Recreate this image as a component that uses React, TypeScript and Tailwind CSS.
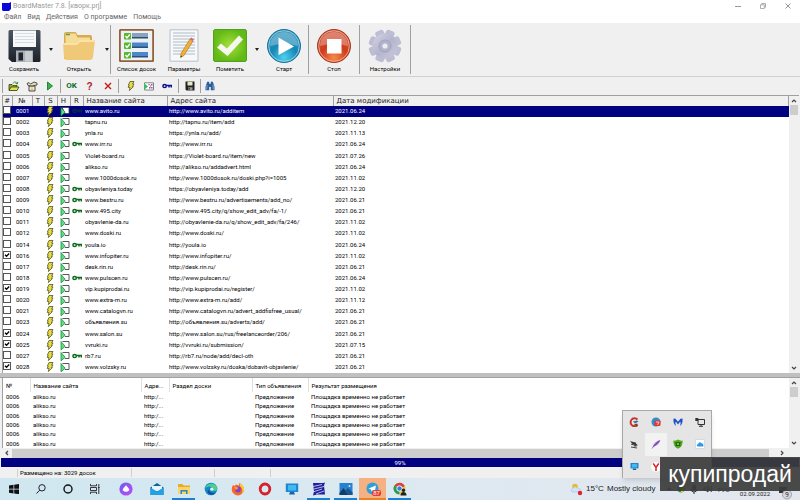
import React, { useState } from 'react';
import clsx from 'clsx';

type Site = {
  id: string;
  name: string;
  url: string;
  date: string;
  hasKey?: boolean;
  checked?: boolean;
};

const SITES: Site[] = [
  { id: '0001', name: 'www.avito.ru', url: 'http://www.avito.ru/additem', date: '2021.06.24', hasKey: true },
  { id: '0002', name: 'tapnu.ru', url: 'http://tapnu.ru/item/add', date: '2021.12.20' },
  { id: '0003', name: 'ynla.ru', url: 'https://ynla.ru/add/', date: '2021.11.13' },
  { id: '0004', name: 'www.irr.ru', url: 'http://www.irr.ru', date: '2021.06.24', hasKey: true },
  { id: '0005', name: 'Violet-board.ru', url: 'https://Violet-board.ru/item/new', date: '2021.07.26' },
  { id: '0006', name: 'alikso.ru', url: 'http://alikso.ru/addadvert.html', date: '2021.06.24' },
  { id: '0007', name: 'www.1000dosok.ru', url: 'http://www.1000dosok.ru/doski.php?i=1005', date: '2021.11.02' },
  { id: '0008', name: 'obyavleniya.today', url: 'https://obyavleniya.today/add', date: '2021.12.20', hasKey: true },
  { id: '0009', name: 'www.bestru.ru', url: 'http://www.bestru.ru/advertisements/add_no/', date: '2021.06.21', hasKey: true },
  { id: '0010', name: 'www.495.city', url: 'http://www.495.city/q/show_edit_adv/fa/-1/', date: '2021.06.21', hasKey: true },
  { id: '0011', name: 'obyavlenie-da.ru', url: 'http://obyavlenie-da.ru/q/show_edit_adv/fa/246/', date: '2021.11.02' },
  { id: '0012', name: 'www.doski.ru', url: 'http://www.doski.ru/', date: '2021.11.02' },
  { id: '0014', name: 'youla.io', url: 'http://youla.io', date: '2021.06.24', hasKey: true },
  { id: '0016', name: 'www.infopiter.ru', url: 'http://www.infopiter.ru/', date: '2021.11.02', checked: true },
  { id: '0017', name: 'desk.rin.ru', url: 'http://desk.rin.ru/', date: '2021.06.21' },
  { id: '0018', name: 'www.pulscen.ru', url: 'http://www.pulscen.ru/', date: '2021.06.24', hasKey: true },
  { id: '0019', name: 'vip.kupiprodai.ru', url: 'http://vip.kupiprodai.ru/register/', date: '2021.11.02', checked: true },
  { id: '0020', name: 'www.extra-m.ru', url: 'http://www.extra-m.ru/add/', date: '2021.11.12' },
  { id: '0021', name: 'www.catalogvn.ru', url: 'http://www.catalogvn.ru/advert_addfisfree_usual/', date: '2021.06.21' },
  { id: '0023', name: 'объявления.su', url: 'http://объявления.su/adverts/add/', date: '2021.06.21' },
  { id: '0024', name: 'www.salon.su', url: 'http://www.salon.su/rus/freelanceorder/206/', date: '2021.06.21', checked: true },
  { id: '0025', name: 'vvruki.ru', url: 'http://vvruki.ru/submission/', date: '2021.07.15', checked: true },
  { id: '0027', name: 'rb7.ru', url: 'http://rb7.ru/node/add/decl-oth', date: '2021.06.21', hasKey: true },
  { id: '0028', name: 'www.volzsky.ru', url: 'http://www.volzsky.ru/doska/dobavit-objavlenie/', date: '2021.06.21', checked: true },
];

const LOG_ROWS = [1, 2, 3, 4, 5, 6];

/* Small icons */

const BoltIcon = () => (
  <svg viewBox="0 0 8 10" className="h-[10px] w-2">
    <path d="M3 .5h4L5.6 3H7L5.4 5.6h1L2.4 9.6 3 6.4H1.2l1-2.4H1.4z" fill="#e6dc45" stroke="#55551e" strokeWidth=".8" />
  </svg>
);

const FormIcon = () => (
  <svg viewBox="0 0 10 10" className="size-[10px]">
    <path d="M2.5 1.500H9v6H5" fill="#fff" stroke="#444" strokeWidth=".9" />
    <path d="M1 1.500v8.300L5.200 6.300z" fill="#5fdc86" stroke="#1d8a43" strokeWidth=".8" />
  </svg>
);

const KeyIcon = ({ color }: { color: string }) => (
  <svg viewBox="0 0 10 6" className="h-[6px] w-[10px]" fill="none" stroke={color} strokeWidth="1.500">
    <ellipse cx="2.600" cy="3" rx="1.700" ry="1.600" />
    <path d="M4.300 2.600H9.300V4.600M7 2.600v1.800" />
  </svg>
);

const FloppyIcon = () => (
  <svg viewBox="0 0 10 10" className="size-[10px]">
    <path d="M.5.500h9v9H1.500l-1-1z" fill="#222" />
    <path d="M2.500.800h5v3.700h-5z" fill="#e8e8c0" />
    <path d="M3 6.200h4.500v3H3z" fill="#999" />
    <path d="M3.500 6.800h1.200v2H3.500z" fill="#222" />
  </svg>
);

const OpenSmallIcon = () => (
  <svg viewBox="0 0 12 11" className="h-[11px] w-3">
    <path d="M1 3.500h3l1 1h4v4.500H1z" fill="#8fae2c" stroke="#34401a" strokeWidth=".8" />
    <path d="M1 9.500l2-3.500h8l-2 3.500z" fill="#e6e34a" stroke="#34401a" strokeWidth=".8" />
    <path d="M5 2.500C6 .500 8 .500 9 2.500M9.800.800L9.300 3 7.500 2.300" fill="none" stroke="#2f8c35" />
  </svg>
);

const EditSmallIcon = () => (
  <svg viewBox="0 0 12 11" className="h-[11px] w-3">
    <path d="M3 5h6v5H3z" fill="#fff6c8" stroke="#333" strokeWidth=".9" />
    <path d="M1 2.500l2-1 1.500 1.500L8 1l3 1v2L6 5 2 4.500z" fill="#ded7b0" stroke="#333" strokeWidth=".8" />
    <path d="M4.500 7h3M4.500 8.500h3" stroke="#999" strokeWidth=".6" />
  </svg>
);

const PlaySmallIcon = () => (
  <svg viewBox="0 0 8 10" className="h-[10px] w-2">
    <path d="M1.500 1v8l5-4z" fill="#39b54a" stroke="#187a31" strokeWidth=".9" />
  </svg>
);

const RunFormIcon = () => (
  <svg viewBox="0 0 11 9" className="h-[9px] w-[11px]">
    <path d="M1.500.800h9v7.200h-9z" fill="#fff" stroke="#666" strokeWidth=".8" />
    <path d="M1 1v7l4-3.500z" fill="#3cbb66" />
    <path d="M5.500 2h1.200v1.200H5.500zM8 2h1.500v1.500H8zM6 5h1.500v1.500H6z" fill="#c0408c" />
    <path d="M7 3.400h1v1.200H7zM8.200 5h1.300v1.500H8.200z" fill="#3a57b8" />
  </svg>
);

const BinocularsIcon = () => (
  <svg viewBox="0 0 10 10" className="size-[10px]">
    <path d="M2.200.800h2v2h1.600v-2h2l1.700 5v3.500H5.800V6H4.200v3.300H.5V5.800z" fill="#2f5f9a" />
    <path d="M2 4l-.4 4.500M8 4l.4 4.500" stroke="#9dc2e8" strokeWidth=".7" />
  </svg>
);

/* Large toolbar icons */

const SaveIcon = () => (
  <svg viewBox="0 0 33 33" className="size-[33px]">
    <defs>
      <linearGradient id="floppy" x2="0" y2="1">
        <stop stopColor="#4c5664" />
        <stop offset="1" stopColor="#1b2029" />
      </linearGradient>
    </defs>
    <path d="M2 1h29q1.500 0 1.500 1.500v29Q32.500 33 31 33H4L.500 30V2.500Q.500 1 2 1z" fill="url(#floppy)" />
    <path d="M5 1.500h23v16.500H5z" fill="#f6f8fa" />
    <path d="M7 4.500h19M7 7.500h19M7 10.500h19M7 13.500h19" stroke="#cdd5dd" strokeWidth=".8" />
    <path d="M8 21.500h17V33H8z" fill="#aab0b6" />
    <path d="M10.500 23.500h4.500v8h-4.500z" fill="#20252d" />
    <path d="M17 22h7v10.500h-7z" fill="#c8cdd2" />
  </svg>
);

const FolderIcon = () => (
  <svg viewBox="0 0 34 33" className="h-[33px] w-[34px]">
    <path d="M2 30V5q0-2 2-2h9q1.500 0 2.500 3H28q2 0 2 2v22z" fill="#d9a94f" />
    <path d="M3.500 4.500h10l2 4H28V24H3.500z" fill="#f5dc97" />
    <path d="M1 14h13l3-3h16l-2 17q-.4 3-3 3H5q-2.500 0-3-3z" fill="#efc878" />
    <path d="M1 14h13l3-3h16l-.3 2H18l-3 3H1.200z" fill="#fae3a4" />
    <path d="M4 5.500h4" stroke="#48a35b" strokeWidth="1.500" />
  </svg>
);

const ListIcon = () => (
  <svg viewBox="0 0 35 33" className="h-[33px] w-[35px]">
    <rect x=".8" y=".8" width="33.400" height="31.400" rx="1.500" fill="#eef1f3" stroke="#93613b" strokeWidth="2" />
    {[4, 13.5, 23].map((y, i) => (
      <g key={y}>
        <rect x="13" y={y} width="16" height="5" fill={i === 0 ? '#8ba4bc' : '#4a87cb'} />
        <rect x="13" y={y + 4} width="16" height="1.500" fill="#2c5078" />
        <rect x="5" y={y} width="7" height="6.500" rx=".8" fill="#55b830" />
        <path d={`M6.500 ${y + 3}l1.500 2 2.800-3.500`} fill="none" stroke="#fff" strokeWidth="1.300" />
      </g>
    ))}
  </svg>
);

const ParamsIcon = () => (
  <svg viewBox="0 0 30 33" className="h-[33px] w-[30px]">
    <path d="M1 .800h28v31.400H1z" fill="#f6f8fa" stroke="#b6c0c8" />
    <path
      d="M4 4h22M4 7h22M4 10h22M4 13h22M4 16h22M4 19h22M4 22h22M4 25h22"
      stroke="#9facb8"
      strokeWidth=".8"
    />
    <path d="M21 10l3 2-9 14.500-3.500 2 .500-4z" fill="#eeb03a" stroke="#a87122" strokeWidth=".6" />
    <path d="M21 10l1-1.500 3 2-1 1.500z" fill="#df5a82" />
    <path d="M12 26.500l-.5 2 1.700-1z" fill="#333" />
  </svg>
);

const MarkIcon = () => (
  <svg viewBox="0 0 34 33" className="h-[33px] w-[34px]">
    <defs>
      <radialGradient id="mark">
        <stop stopColor="#a8e03c" />
        <stop offset="1" stopColor="#62ba16" />
      </radialGradient>
    </defs>
    <rect x=".6" y=".6" width="32.800" height="31.800" rx="1.500" fill="url(#mark)" stroke="#4b9a17" />
    <path d="M4 18.500l4-4 6 5L26 6.500l4 4L14.500 27z" fill="#f4f8ee" />
  </svg>
);

const StartIcon = () => (
  <svg viewBox="0 0 34 34" className="size-[34px]">
    <defs>
      <radialGradient id="start" cy=".85" r=".8">
        <stop stopColor="#4fd0ee" />
        <stop offset=".5" stopColor="#1687b5" />
        <stop offset="1" stopColor="#2f93bd" />
      </radialGradient>
    </defs>
    <circle cx="17" cy="17" r="16.500" fill="url(#start)" stroke="#1c6f93" />
    <circle cx="17" cy="17" r="15.300" fill="none" stroke="#a9dcee" strokeWidth=".8" />
    <path d="M3 17A14 14 0 0 1 31 17Q17 13 3 17z" fill="#fff" opacity=".28" />
    <path d="M11.500 8.500v17.500L27 17.500z" fill="#fff" />
  </svg>
);

const StopIcon = () => (
  <svg viewBox="0 0 34 34" className="size-[34px]">
    <defs>
      <radialGradient id="stop" cy=".85" r=".8">
        <stop stopColor="#f68a4c" />
        <stop offset=".5" stopColor="#cf3c1c" />
        <stop offset="1" stopColor="#d1583f" />
      </radialGradient>
    </defs>
    <circle cx="17" cy="17" r="16.500" fill="url(#stop)" stroke="#a2391f" />
    <circle cx="17" cy="17" r="15.300" fill="none" stroke="#f3b9a6" strokeWidth=".8" />
    <path d="M3 17A14 14 0 0 1 31 17Q17 13 3 17z" fill="#fff" opacity=".28" />
    <path d="M10 10h14.500v14.500H10z" fill="#fff" />
  </svg>
);

const GearIcon = () => (
  <svg viewBox="0 0 34 34" className="size-[34px]">
    <defs>
      <linearGradient id="gear" x2="1" y2="1">
        <stop stopColor="#d6d6e6" />
        <stop offset=".5" stopColor="#b4b4cc" />
        <stop offset="1" stopColor="#cacade" />
      </linearGradient>
    </defs>
    {[22, 67, 112, 157, 202, 247, 292, 337].map((a) => (
      <rect key={a} x="12.500" y=".6" width="9" height="10" rx="2.500" fill="#bdbdd4" transform={`rotate(${a} 17 17)`} />
    ))}
    <circle cx="17" cy="17" r="12.500" fill="url(#gear)" />
    <circle cx="17" cy="17" r="6" fill="#b2b2cc" stroke="#9a9ab6" strokeWidth=".8" />
    <circle cx="17" cy="17" r="2.600" fill="#ececf2" />
  </svg>
);

/* Taskbar icons */

const BoardMasterIcon = () => (
  <svg viewBox="0 0 14 14" className="size-[14px]">
    <path d="M1 1h10l2-.5-1 3 1 9H5l-4 1 1-4z" fill="#20209a" />
    <path d="M1 4.500l9-2M2 7l10-2.500M1 10l9-3M4 12l8-3" stroke="#d7dcff" strokeWidth=".8" />
  </svg>
);

const MonitorIcon = ({ className }: { className: string }) => (
  <svg viewBox="0 0 14 14" className={className}>
    <path d="M.800 1.500h12.400v8.500H.800z" fill="#1d86cf" />
    <path d="M3 3h8v5.500H3z" fill="#43b7ee" />
    <path d="M4 12.500h6L9 10H5z" fill="#1565a5" />
  </svg>
);

const TASKS: { label: string; icon: React.ReactNode; open?: boolean; alert?: boolean }[] = [
  {
    label: 'Почта',
    icon: (
      <svg viewBox="0 0 14 14" className="size-[14px]">
        <path d="M.500 5.500L7 1l6.500 4.500v7.500H.500z" fill="#0f5fa8" />
        <path d="M2 4h10v5H2z" fill="#e9f6ff" />
        <path d="M.500 5.500L7 9.500l6.500-4v7.500H.500z" fill="#23a0e6" />
      </svg>
    ),
  },
  {
    label: 'Проводник',
    open: true,
    icon: (
      <svg viewBox="0 0 14 14" className="size-[14px]">
        <path d="M1 2h4.500l1 1.500H13V12H1z" fill="#e9a92f" />
        <path d="M1 5h12v7H1z" fill="#fbd663" />
        <path d="M3.500 12V8h7v4H9V9.500H5V12z" fill="#2a86d1" />
      </svg>
    ),
  },
  {
    label: 'Edge',
    icon: (
      <svg viewBox="0 0 14 14" className="size-[14px]">
        <circle cx="7" cy="7" r="6.300" fill="#1785c9" />
        <path d="M1 6.500C2 1 12-.500 13.300 6.500c0 3-4 3-4.800 1.500C9.500 4 4 3.500 1 6.500z" fill="#4bcf8c" />
        <path d="M5.500 7c-1 3 2 5 6 3.500C9 14 4 13 3.500 9.500z" fill="#0c4f97" />
        <circle cx="7.800" cy="7.200" r="1.600" fill="#dff2f8" />
      </svg>
    ),
  },
  {
    label: 'Firefox',
    icon: (
      <svg viewBox="0 0 14 14" className="size-[14px]">
        <path d="M2 3l1.500 1L5 2.500 8 3.500 8.500.800Q13.500 4 13 8a6.200 6.200 0 0 1-12.300 0Q.500 5 2 3z" fill="#f8682c" />
        <path d="M9 1.200Q13.500 4 13 8q-.5 2.500-2.500 4Q13 7 9 4z" fill="#ffce3a" />
        <circle cx="7" cy="7.500" r="2.900" fill="#7a45c9" />
        <path d="M3 5q3-.5 4.500 1L5 8z" fill="#fca02f" />
      </svg>
    ),
  },
  {
    label: 'Opera',
    icon: (
      <svg viewBox="0 0 14 14" className="size-[14px]">
        <ellipse cx="7" cy="7" rx="4.800" ry="5" fill="none" stroke="#d6202c" strokeWidth="2.800" />
      </svg>
    ),
  },
  { label: 'Компьютер', icon: <MonitorIcon className="size-[14px]" /> },
  { label: 'BoardMaster', open: true, icon: <BoardMasterIcon /> },
  {
    label: 'Фотографии',
    open: true,
    icon: (
      <svg viewBox="0 0 14 14" className="size-[14px]">
        <path d="M.500 1h13v12H.500z" fill="#2781cf" />
        <path d="M.500 11l4-5 5 7h-9z" fill="#123d69" />
        <path d="M6 9l3-3 4.500 4.500V13H8.500z" fill="#1a568f" />
        <circle cx="10.500" cy="4" r="1" fill="#cde8fb" />
      </svg>
    ),
  },
  {
    label: 'Telegram',
    open: true,
    alert: true,
    icon: (
      <svg viewBox="0 0 14 14" className="size-[14px]">
        <circle cx="6.500" cy="6.500" r="6" fill="#2d9fd9" />
        <path d="M2.500 6.500l7.500-3-1.300 6.500-2.200-1.500L5.300 9.500 5 7.500z" fill="#fff" />
      </svg>
    ),
  },
  {
    label: 'Chrome',
    open: true,
    icon: (
      <svg viewBox="0 0 14 14" className="size-[14px]">
        <path d="M6.500 6.500L1.300 3.500A6 6 0 0 1 12 4.500z" fill="#df4035" />
        <path d="M6.500 6.500L12 4.200A6 6 0 0 1 6.500 12.500z" fill="#f8c531" />
        <path d="M6.500 6.500L6.500 12.500A6 6 0 0 1 1.300 3.500z" fill="#2e9c4b" />
        <circle cx="6.500" cy="6.500" r="2.700" fill="#3b7fe4" stroke="#fff" strokeWidth=".9" />
        <circle cx="10.500" cy="8.300" r="1.700" fill="#222" />
        <path d="M7.500 13.500q0-3.500 3-3.500t3 3.500z" fill="#222" />
      </svg>
    ),
  },
];

const TRAY_ICONS: { label: string; icon: React.ReactNode }[] = [
  {
    label: 'CCleaner',
    icon: (
      <>
        <path d="M8.500 2.500A4 4 0 1 0 8.500 8" fill="none" stroke="#c9352c" strokeWidth="2" />
        <path d="M4 4.500l4-1 1.500 1L6 6.500z" fill="#3a6fa9" />
        <path d="M3 8.500l5-2 1 2z" fill="#6c3a2c" />
      </>
    ),
  },
  {
    label: 'Telegram',
    icon: (
      <>
        <circle cx="5" cy="5" r="4.500" fill="#2a8fcb" />
        <rect x="3.500" y="3.500" width="6" height="5.500" rx="1" fill="#e8352f" />
        <path d="M5 5h3L6.500 8" fill="none" stroke="#fff" strokeWidth=".7" />
      </>
    ),
  },
  {
    label: 'Malwarebytes',
    icon: (
      <path
        d="M.500 1.500Q0 7 3 9 1.800 6 2.800 4.500L5 7.500l2.200-3Q8.200 6 7 9q3-2 2.500-7.500L7.500 1.800 5 4.800 2.500 1.800z"
        fill="#1a50cf"
      />
    ),
  },
  {
    label: 'Экран',
    icon: (
      <>
        <path d="M3 2.500h6.500v5H3zM6 7.500V9M4 9.300h4" fill="none" stroke="#333" />
        <path d="M.300 1h3v3h-3z" fill="#333" />
      </>
    ),
  },
  {
    label: 'Punto',
    icon: (
      <>
        <path d="M1 2l5 1.500 3 3-5-1z" fill="#333" />
        <path d="M6 3v5M2 8l6 1M2 5l6 2" stroke="#444" />
      </>
    ),
  },
  {
    label: 'Перо',
    icon: (
      <>
        <path d="M1.500 8Q3 3 9.500.800 8 6 3 7.500z" fill="#9a63cc" />
        <path d="M.800 9.500L8 2" stroke="#6b3da0" strokeWidth=".7" />
      </>
    ),
  },
  {
    label: 'Защита',
    icon: (
      <>
        <path d="M.300 1.500Q3 2 5 .500q2 1.500 4.700 1Q10 7.500 5 9.800 0 7.500.300 1.500z" fill="#4fae22" />
        <path d="M2 4h6M2.500 6.500h5" stroke="#163d0a" strokeWidth=".8" />
        <circle cx="5" cy="5" r="1.500" fill="#b5e052" stroke="#163d0a" strokeWidth=".8" />
      </>
    ),
  },
  {
    label: 'Облако',
    icon: (
      <>
        <path d="M.500.500h9v9h-9z" fill="#fff" stroke="#bfd4e4" strokeWidth=".7" />
        <path d="M2.500 7.500q-1.500-2 .6-2.500Q4 2 6.300 4q2.700.500 2 3.500z" fill="#3097ea" />
      </>
    ),
  },
];

const ToolButton = ({
  label,
  className,
  children,
}: {
  label: string;
  className: string;
  children: React.ReactNode;
}) => (
  <button className={clsx('flex flex-col items-center pt-[6px]', className)}>
    <span className="flex h-[35px] items-start justify-center">{children}</span>
    <span className="text-[6px] leading-[10px] whitespace-nowrap text-black">{label}</span>
  </button>
);

const DropArrow = ({ label }: { label: string }) => (
  <button aria-label={label} className="flex w-[6px] items-center justify-center">
    <svg viewBox="0 0 4 3" className="h-[3px] w-1 shrink-0">
      <path d="M0 0h4L2 3z" fill="#222" />
    </svg>
  </button>
);

const Separator = () => <div className="my-[2px] w-px shrink-0 bg-[#a0a0a0]" />;

const SmallButton = ({ label, children }: { label: string; children: React.ReactNode }) => (
  <button aria-label={label} className="flex w-[18px] items-center justify-center">
    {children}
  </button>
);

const Chevron = ({ className }: { className?: string }) => (
  <svg viewBox="0 0 6 6" className={clsx('size-[6px]', className)}>
    <path d="M1 4l2-2 2 2" fill="none" stroke="#444" strokeWidth="1.200" />
  </svg>
);

const VerticalScroll = ({ label }: { label: string }) => (
  <div className="flex w-[10px] shrink-0 flex-col items-center bg-[#f0f0f0] pb-[2px]">
    <button aria-label={`${label}: вверх`} className="flex h-[9px] items-center">
      <Chevron />
    </button>
    <div className="h-[10px] w-2 bg-[#cdcdcd]" />
    <button aria-label={`${label}: вниз`} className="mt-auto">
      <Chevron className="rotate-180" />
    </button>
  </div>
);

const TitleBar = () => (
  <header className="flex h-3 items-center bg-white pl-[2px] text-[7px] text-[#999]">
    <svg viewBox="0 0 9 9" className="size-[9px]">
      <path d="M0 1h7l2-1v7L7 9H1l-1-1z" fill="#0808d8" />
    </svg>
    <span className="ml-[2px]">BoardMaster 7.8. [кворк.prj]</span>
    <div className="ml-auto flex">
      <button aria-label="Свернуть" className="flex w-[25px] justify-center">
        <svg viewBox="0 0 6 6" className="size-[6px]">
          <path d="M0 3.500h6" stroke="#999" />
        </svg>
      </button>
      <button aria-label="Развернуть" className="flex w-[25px] justify-center">
        <svg viewBox="0 0 6 6" className="size-[6px]" fill="none" stroke="#999" strokeWidth=".8">
          <path d="M.500 1.800h3.800v3.700H.500zM1.800 1.800V.500h3.700v3.700H4.300" />
        </svg>
      </button>
      <button aria-label="Закрыть" className="flex w-[25px] justify-center">
        <svg viewBox="0 0 6 6" className="size-[6px]">
          <path d="M.500.500l5 5M5.500.500l-5 5" stroke="#888" strokeWidth=".9" />
        </svg>
      </button>
    </div>
  </header>
);

const SiteTable = () => {
  const [checked, setChecked] = useState<string[]>(SITES.filter((s) => s.checked).map((s) => s.id));

  const toggle = (id: string) => {
    setChecked((prev) => (prev.includes(id) ? prev.filter((c) => c !== id) : [...prev, id]));
  };

  return (
    <div className="mr-[1px] ml-[2px] flex min-h-0 flex-1 border-t border-l border-[#a0a0a0] bg-white">
      <table className="h-full w-full min-w-0 flex-1 table-fixed border-collapse text-left">
        <colgroup>
          <col className="w-[9px]" />
          <col className="w-5" />
          <col className="w-3" />
          <col className="w-[13px]" />
          <col className="w-[13px]" />
          <col className="w-[13px]" />
          <col className="w-[84px]" />
          <col className="w-[166px]" />
          <col />
        </colgroup>
        <thead>
          <tr className="h-[10px] bg-[#f0f0f0] font-['DejaVu_Sans'] text-[7px] leading-[9px] text-[#222]">
            {['#', '№', 'T', 'S', 'H', 'R'].map((h) => (
              <th key={h} className="border-r border-[#a0a0a0] p-0 text-center font-normal">
                {h}
              </th>
            ))}
            {['Название сайта', 'Адрес сайта', 'Дата модификации'].map((h) => (
              <th key={h} className="border-r border-[#a0a0a0] p-0 pl-[3px] font-normal">
                {h}
              </th>
            ))}
          </tr>
        </thead>
        <tbody className="align-top text-[6px] leading-[9px] text-black">
          {SITES.map((site, i) => (
            <tr key={site.id} className={clsx(i === 0 && 'bg-[#000080] text-white')}>
              <td className="p-0">
                <label className="relative block size-2">
                  <input
                    type="checkbox"
                    aria-label={site.name}
                    checked={checked.includes(site.id)}
                    onChange={() => toggle(site.id)}
                    className="peer block size-2 appearance-none border border-[#555] bg-white"
                  />
                  <svg viewBox="0 0 8 8" className="pointer-events-none absolute inset-0 hidden peer-checked:block">
                    <path d="M2 3.800l1.500 1.500L6.200 2.500" fill="none" stroke="#000" strokeWidth="1.300" />
                  </svg>
                </label>
              </td>
              <td className="p-0 pl-1">{site.id}</td>
              <td className="p-0" />
              <td className="p-0 pl-[2px]">
                <BoltIcon />
              </td>
              <td className="p-0 pl-[3px]">
                <FormIcon />
              </td>
              <td className="p-0 pt-[2px] pl-[2px]">
                {site.hasKey && <KeyIcon color={i === 0 ? '#0a2a4a' : '#0b6b1d'} />}
              </td>
              <td className="p-0 pl-[2px]">{site.name}</td>
              <td className="p-0 pl-[2px] whitespace-nowrap">{site.url}</td>
              <td className="p-0 pl-[2px]">{site.date}</td>
            </tr>
          ))}
        </tbody>
      </table>
      <VerticalScroll label="Список сайтов" />
    </div>
  );
};

const PlacementLog = () => (
  <div className="mr-[1px] ml-[2px] flex h-[70px] shrink-0 border-l border-[#a0a0a0] bg-white">
    <table className="h-full w-full min-w-0 flex-1 table-fixed border-collapse text-left text-[6px] leading-[9px] text-black">
      <colgroup>
        <col className="w-[27px]" />
        <col className="w-[111px]" />
        <col className="w-7" />
        <col className="w-[83px]" />
        <col className="w-14" />
        <col />
      </colgroup>
      <thead>
        <tr className="h-[14px]">
          {['№', 'Название сайта', 'Адре...', 'Раздел доски', 'Тип объявления', 'Результат размещения'].map((h) => (
            <th key={h} className="border-r border-[#e0e0e0] p-0 pl-[3px] font-normal whitespace-nowrap last:border-r-0">
              {h}
            </th>
          ))}
        </tr>
      </thead>
      <tbody>
        {LOG_ROWS.map((row) => (
          <tr key={row}>
            <td className="p-0 pl-[3px]">0006</td>
            <td className="p-0 pl-[3px]">alikso.ru</td>
            <td className="p-0 pl-[3px]">http:/...</td>
            <td className="p-0" />
            <td className="p-0 pl-[3px]">Предложение</td>
            <td className="p-0 pl-[3px]">Площадка временно не работает</td>
          </tr>
        ))}
      </tbody>
    </table>
    <VerticalScroll label="Журнал" />
  </div>
);

const Taskbar = () => (
  <footer className="flex h-[22px] shrink-0 bg-linear-to-r from-[#cfe7f0] via-[#dde9f1] to-[#e4e6ee]">
    <button aria-label="Пуск" className="flex w-[27px] items-center justify-center">
      <svg viewBox="0 0 10 10" className="size-[10px]">
        <path d="M0 1.500L4.500.800v4H0zM5.200.700L10 0v4.800H5.200zM0 5.500h4.500v4L0 8.800zM5.200 5.500H10V10.200L5.200 9.500z" fill="#111" />
      </svg>
    </button>
    <button aria-label="Поиск" className="flex w-[27px] items-center justify-center">
      <svg viewBox="0 0 10 10" className="size-[10px]" fill="none" stroke="#222">
        <circle cx="6" cy="3.800" r="3.200" />
        <path d="M3.700 6.200L.500 9.500" />
      </svg>
    </button>
    <button aria-label="Кортана" className="flex w-[27px] items-center justify-center">
      <svg viewBox="0 0 10 10" className="size-[10px]">
        <circle cx="5" cy="5" r="4" fill="none" stroke="#111" strokeWidth="1.400" />
      </svg>
    </button>
    <button aria-label="Представление задач" className="flex w-[27px] items-center justify-center">
      <svg viewBox="0 0 10 10" className="size-[10px]" fill="none" stroke="#222" strokeWidth=".9">
        <path d="M.500 0v1.800h6V0M.500 3.500h6v3h-6zM.500 10V8.200h6V10M8.800 0v10M8 3.500h1.600" />
      </svg>
    </button>
    <button aria-label="Алиса" className="flex w-[35px] items-center justify-center">
      <svg viewBox="0 0 14 14" className="size-[14px]">
        <defs>
          <linearGradient id="alice" x2="1" y2="1">
            <stop stopColor="#6f5cf5" />
            <stop offset="1" stopColor="#c04bf2" />
          </linearGradient>
        </defs>
        <circle cx="7" cy="7" r="6.600" fill="url(#alice)" />
        <path d="M7 3.200q3.500 3.500 3.300 5Q7 11.500 3.700 8.200 3.500 6.700 7 3.200z" fill="#fff" />
      </svg>
    </button>
    {TASKS.map((task) => (
      <button
        key={task.label}
        aria-label={task.label}
        className={clsx('relative flex w-[27px] items-center justify-center', task.alert && 'bg-[#f5b181]')}
      >
        {task.icon}
        {task.alert && (
          <span className="absolute right-[5px] bottom-[4px] rounded-xs bg-[#e23b35] px-px text-[6px] leading-[6px] text-white">
            87
          </span>
        )}
        {task.open && (
          <span
            className={clsx('absolute bottom-0 h-[2px]', task.alert ? 'inset-x-0 bg-[#e8812c]' : 'inset-x-[2px] bg-[#1b7fd6]')}
          />
        )}
      </button>
    ))}
    <div className="ml-auto flex items-center font-['Liberation_Sans'] text-[8px] text-[#222]">
      <svg viewBox="0 0 14 14" className="size-[14px]">
        <circle cx="6" cy="4.500" r="2.800" fill="#f3b62b" />
        <path d="M3 10q-2.500-2.500 1-4Q6 3.500 8.500 6q4 .500 3 4z" fill="#cfe3f4" stroke="#9fc0dc" strokeWidth=".6" />
        <circle cx="11" cy="11" r="2.200" fill="#dc2035" />
      </svg>
      <span className="ml-[3px] w-[21px] whitespace-nowrap">15°C</span>
      <span className="w-[56px] whitespace-nowrap">Mostly cloudy</span>
    </div>
    <div className="flex w-[137px] items-center text-[6px] text-[#222]">
      <button aria-label="Скрытые значки" className="flex w-[11px] justify-center">
        <Chevron />
      </button>
      <svg viewBox="0 0 10 10" className="ml-[3px] size-2">
        <circle cx="5" cy="5" r="4.500" fill="#2f9e48" />
        <path d="M5 5l4-2a4.500 4.500 0 0 1-4 6.500z" fill="#f2d12f" />
      </svg>
      <svg viewBox="0 0 8 10" className="ml-[5px] h-[10px] w-2" fill="none" stroke="#333">
        <rect x="2.500" y="1" width="3" height="5" rx="1.500" fill="#333" />
        <path d="M1 5q0 3 3 3t3-3M4 8v2" />
      </svg>
      <svg viewBox="0 0 10 10" className="ml-[5px] size-[10px]" fill="none" stroke="#333">
        <path d="M1 4h1.500L5 2v6L2.500 6H1zM6.500 3.500q1 1.500 0 3M8 2q2 3 0 6" />
      </svg>
      <span className="ml-[5px]">РУС</span>
      <span className="ml-auto self-end pb-[2px] leading-[8px]">02.09.2022</span>
      <svg viewBox="0 0 14 14" className="mr-2 ml-2 size-[14px] self-end">
        <path d="M1 1h8v6H1z" fill="#333" />
        <circle cx="9" cy="8.500" r="4.500" fill="#d6d8de" stroke="#888" strokeWidth=".7" />
        <text x="9" y="11" fontSize="7" textAnchor="middle" fill="#333">
          9
        </text>
      </svg>
    </div>
  </footer>
);

const TrayPopup = () => (
  <div className="absolute right-[88px] bottom-[22px] grid h-[68px] w-[90px] grid-cols-4 grid-rows-3 border border-b-0 border-[#a8a8a8] bg-[#e5e5e5] shadow-md">
    {TRAY_ICONS.map((tray) => (
      <button
        key={tray.label}
        aria-label={tray.label}
        className={clsx('flex items-center justify-center', tray.label === 'Перо' && 'bg-[#f2f2f2]')}
      >
        <svg viewBox="0 0 10 10" className="size-[10px]">
          {tray.icon}
        </svg>
      </button>
    ))}
    <button aria-label="Монитор" className="flex items-center justify-center">
      <MonitorIcon className="size-[9px]" />
    </button>
    <button aria-label="Яндекс" className="flex items-center justify-center">
      <svg viewBox="0 0 10 10" className="size-[10px]">
        <circle cx="5" cy="5" r="4.800" fill="#fff" />
        <path d="M2.300 1.500L5 5.500l2.700-4M5 5.500V9" fill="none" stroke="#d9252b" strokeWidth="1.500" />
      </svg>
    </button>
  </div>
);

const App: React.FC = () => {
  return (
    <div className="relative flex h-screen min-h-[500px] flex-col overflow-hidden bg-[#f0f0f0] font-[Roboto,sans-serif]">
      <div className="bg-white">
        <TitleBar />
        <nav className="flex h-[11px] items-center gap-[6px] pl-1 text-[7px] text-[#666]">
          {['Файл', 'Вид', 'Действия', 'О программе', 'Помощь'].map((item) => (
            <button key={item}>{item}</button>
          ))}
        </nav>
      </div>

      {/* Main toolbar */}
      <div className="flex h-[54px] shrink-0 border-b border-[#d0d0d0]">
        <ToolButton label="Сохранить" className="w-12">
          <SaveIcon />
        </ToolButton>
        <DropArrow label="Варианты сохранения" />
        <ToolButton label="Открыть" className="w-[50px]">
          <FolderIcon />
        </ToolButton>
        <DropArrow label="Недавние проекты" />
        <Separator />
        <ToolButton label="Список досок" className="w-[51px]">
          <ListIcon />
        </ToolButton>
        <ToolButton label="Параметры" className="w-11">
          <ParamsIcon />
        </ToolButton>
        <ToolButton label="Пометить" className="w-12">
          <MarkIcon />
        </ToolButton>
        <DropArrow label="Варианты пометки" />
        <ToolButton label="Старт" className="w-12">
          <StartIcon />
        </ToolButton>
        <Separator />
        <ToolButton label="Стоп" className="w-[50px]">
          <StopIcon />
        </ToolButton>
        <Separator />
        <ToolButton label="Настройки" className="w-[50px]">
          <GearIcon />
        </ToolButton>
        <Separator />
      </div>

      {/* Secondary toolbar */}
      <div className="flex h-[18px] shrink-0 pl-[2px]">
        <Separator />
        <div className="flex w-[57px] justify-center">
          <SmallButton label="Открыть список">
            <OpenSmallIcon />
          </SmallButton>
          <SmallButton label="Изменить">
            <EditSmallIcon />
          </SmallButton>
          <SmallButton label="Запустить">
            <PlaySmallIcon />
          </SmallButton>
        </div>
        <Separator />
        <div className="flex w-[57px] justify-center font-bold">
          <SmallButton label="OK">
            <span className="text-[8px] text-[#0b6b1d]">OK</span>
          </SmallButton>
          <SmallButton label="Справка">
            <span className="font-['Liberation_Sans'] text-[10px] text-[#b01c1c]">?</span>
          </SmallButton>
          <SmallButton label="Удалить">
            <svg viewBox="0 0 8 8" className="size-2">
              <path d="M1 1l6 6M7 1L1 7" stroke="#c01c1c" strokeWidth="1.400" />
            </svg>
          </SmallButton>
        </div>
        <Separator />
        <div className="flex w-[59px] justify-center">
          <SmallButton label="Быстрый режим">
            <BoltIcon />
          </SmallButton>
          <SmallButton label="Форма">
            <RunFormIcon />
          </SmallButton>
          <SmallButton label="Ключ">
            <KeyIcon color="#10108c" />
          </SmallButton>
        </div>
        <Separator />
        <div className="flex w-[21px] justify-center">
          <SmallButton label="Сохранить список">
            <FloppyIcon />
          </SmallButton>
        </div>
        <Separator />
        <SmallButton label="Найти">
          <BinocularsIcon />
        </SmallButton>
      </div>

      <SiteTable />
      <div className="h-[5px] shrink-0 border-b border-[#a0a0a0] bg-[#c0c0c0]" />
      <PlacementLog />

      {/* Horizontal scroll */}
      <div className="mr-[13px] ml-[2px] flex h-[10px] shrink-0 items-center bg-[#f0f0f0]">
        <button aria-label="Влево" className="flex w-[10px] justify-center">
          <Chevron className="-rotate-90" />
        </button>
        <div className="mr-2 h-[9px] flex-1 bg-[#cdcdcd]" />
        <button aria-label="Вправо" className="flex w-[10px] justify-center">
          <Chevron className="rotate-90" />
        </button>
      </div>

      <div className="mx-[1px] flex h-[9px] shrink-0 items-center justify-center bg-[#000080] text-[6px] text-white">99%</div>

      {/* Status bar */}
      <div className="flex h-[11px] shrink-0 items-center text-[6px] text-black">
        <div className="h-2 w-[18px] border-r border-[#d0d0d0]" />
        <div className="w-[114px] border-r border-[#d0d0d0] pl-[2px] leading-[9px]">Размещено на: 3029 досок</div>
        <div className="h-2 w-[83px] border-r border-[#d0d0d0]" />
        <div className="h-2 w-14 border-r border-[#d0d0d0]" />
      </div>

      <Taskbar />
      <TrayPopup />

      <div className="absolute right-0 bottom-[9px] flex h-[34px] w-[140px] items-center justify-center bg-[#3c3c3c]/93 font-['Liberation_Sans'] text-[23px] text-white">
        купипродай
      </div>
    </div>
  );
};

export default App;
